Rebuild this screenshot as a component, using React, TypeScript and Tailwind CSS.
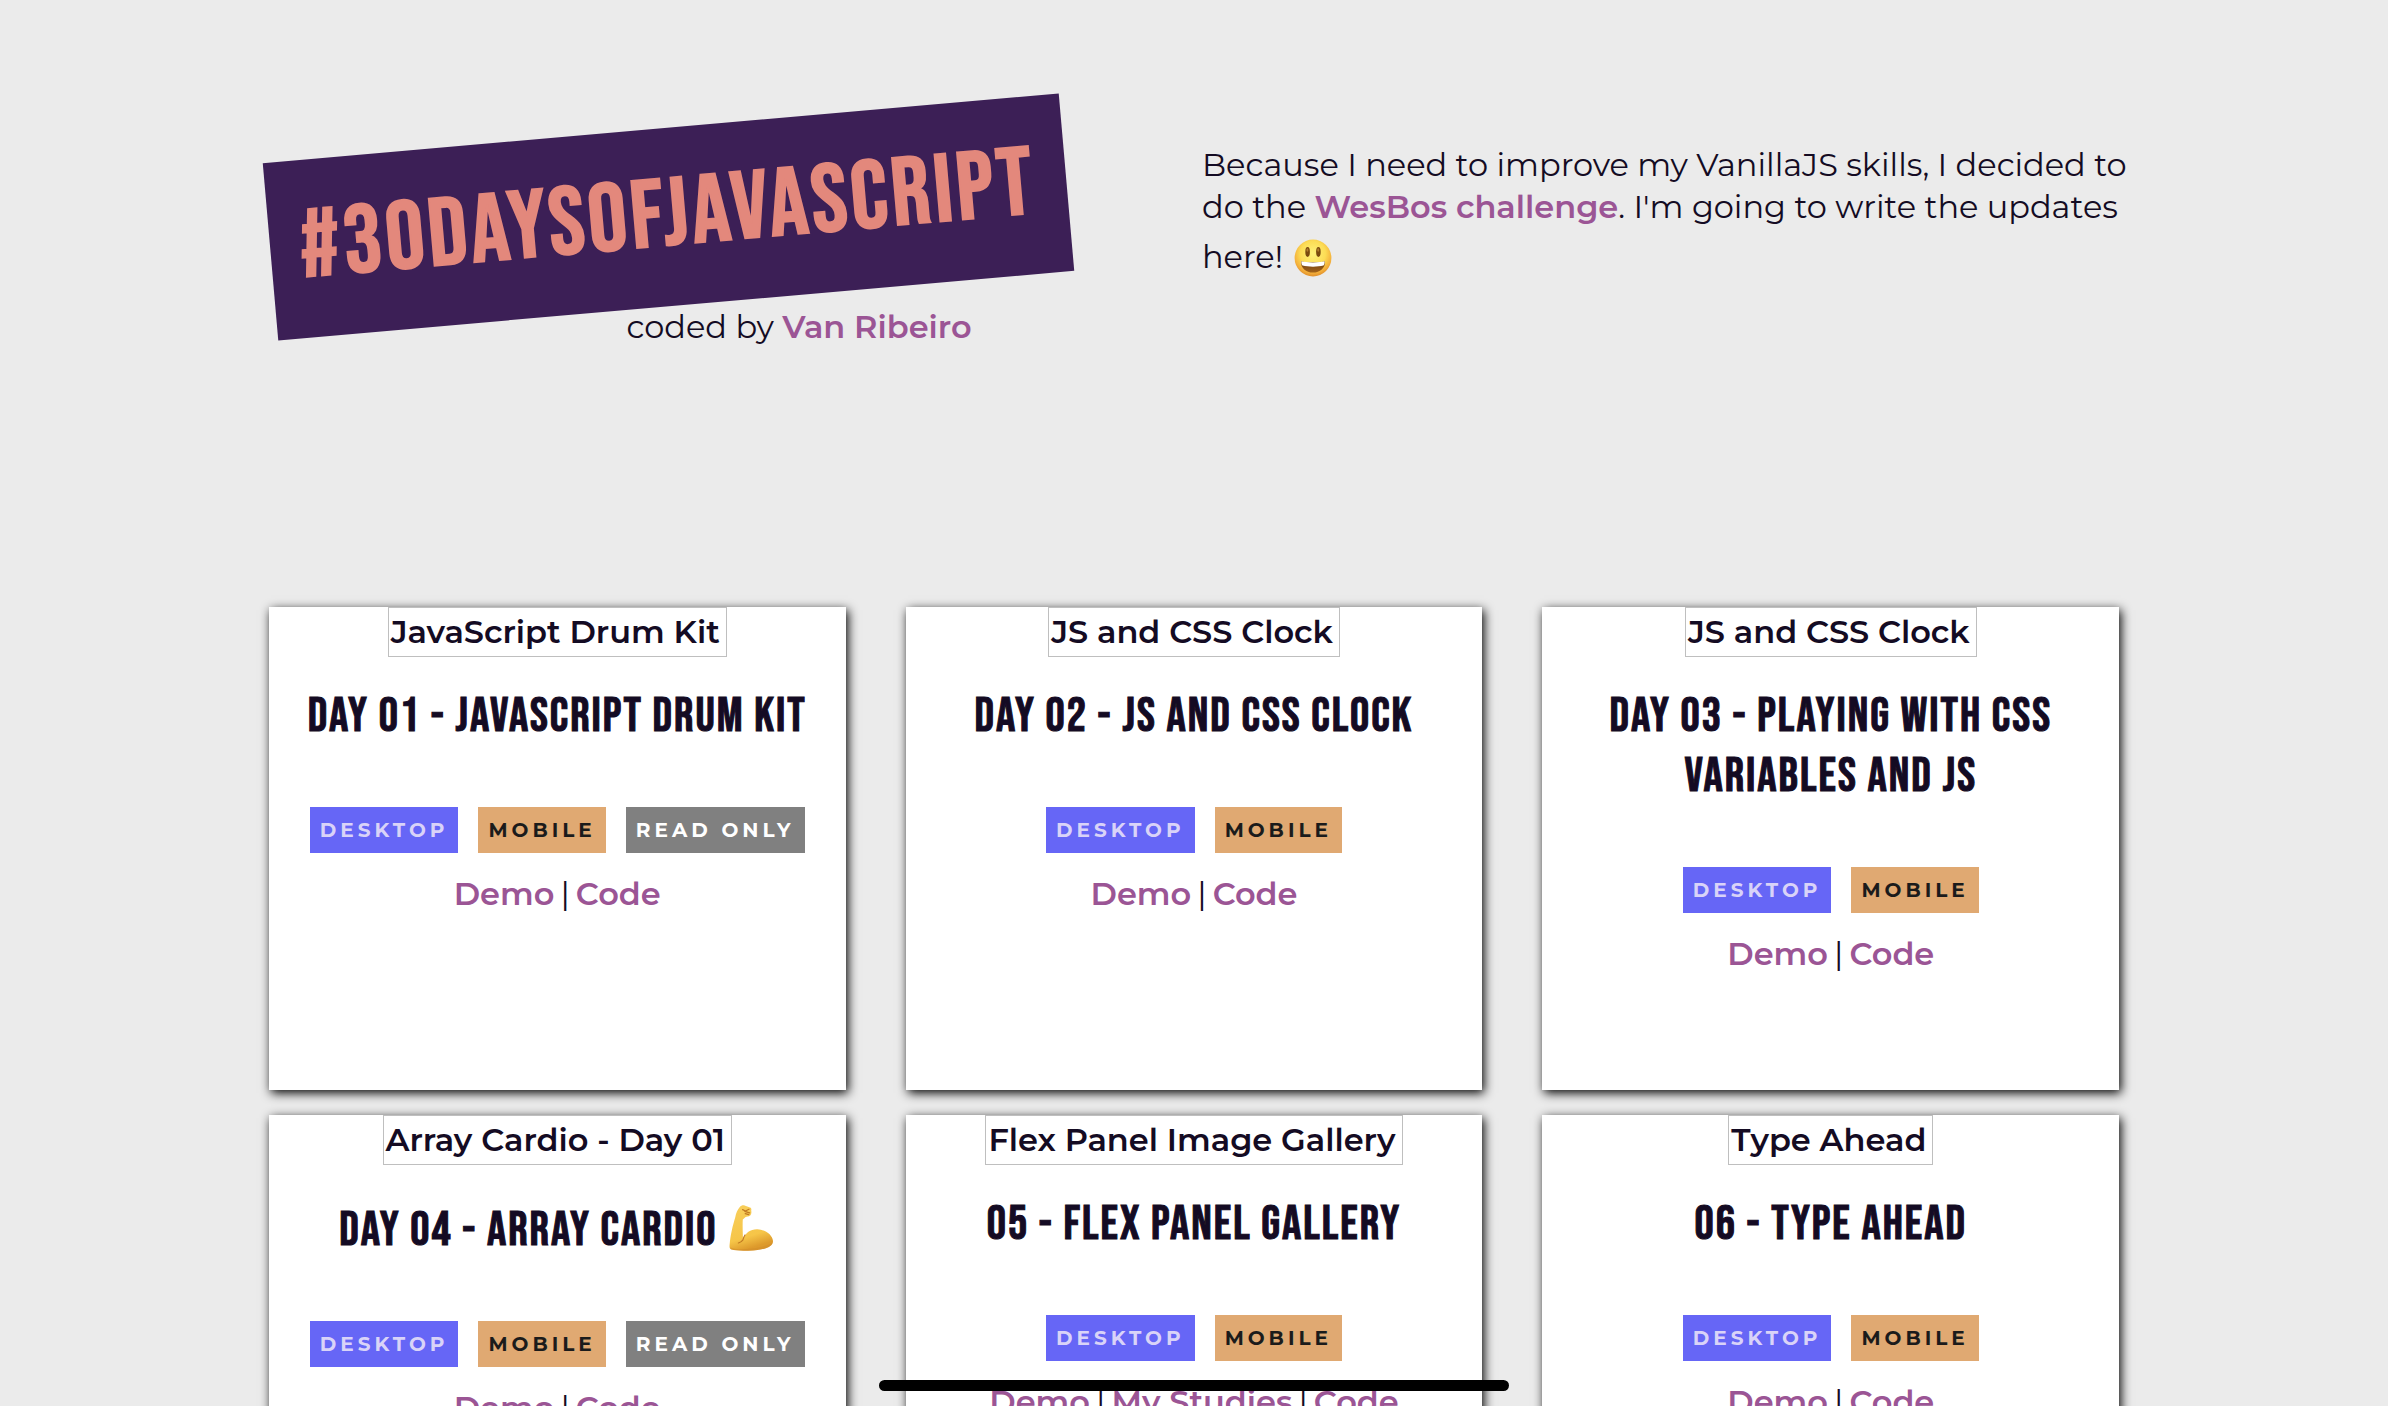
import type { ReactNode } from "react";

type Tag = "desktop" | "mobile" | "readonly";

interface Project {
  label: string;
  title: string;
  strong?: boolean;
  tags: Tag[];
  links: string[];
}

const projects: Project[] = [
  { label: "JavaScript Drum Kit", title: "Day 01 - JavaScript Drum Kit", tags: ["desktop", "mobile", "readonly"], links: ["Demo", "Code"] },
  { label: "JS and CSS Clock", title: "Day 02 - JS and CSS Clock", tags: ["desktop", "mobile"], links: ["Demo", "Code"] },
  { label: "JS and CSS Clock", title: "Day 03 - Playing with CSS Variables and JS", tags: ["desktop", "mobile"], links: ["Demo", "Code"] },
  { label: "Array Cardio - Day 01", title: "Day 04 - Array Cardio", strong: true, tags: ["desktop", "mobile", "readonly"], links: ["Demo", "Code"] },
  { label: "Flex Panel Image Gallery", title: "05 - Flex Panel Gallery", tags: ["desktop", "mobile"], links: ["Demo", "My Studies", "Code"] },
  { label: "Type Ahead", title: "06 - Type Ahead", tags: ["desktop", "mobile"], links: ["Demo", "Code"] },
];

const tagStyles: Record<Tag, { text: string; className: string }> = {
  desktop: { text: "Desktop", className: "bg-[#6666f6] text-[#d9d3f8]" },
  mobile: { text: "Mobile", className: "bg-[#e0a972] text-[#1b1b1b]" },
  readonly: { text: "Read only", className: "bg-[#808080] text-white" },
};

function Smiley() {
  return (
    <svg viewBox="0 0 40 40" role="img" aria-label="Smiling face" className="mt-2.5 ml-0.5 inline-block size-10 align-[-10px]">
      <defs>
        <radialGradient id="face" cx="0.5" cy="0.38" r="0.62">
          <stop offset="0" stopColor="#fff27a" />
          <stop offset="0.55" stopColor="#fcdc55" />
          <stop offset="0.85" stopColor="#f3ae3a" />
          <stop offset="1" stopColor="#e08f2c" />
        </radialGradient>
        <linearGradient id="mouth" x1="0" y1="0" x2="0" y2="1">
          <stop offset="0" stopColor="#6b3d10" />
          <stop offset="1" stopColor="#a5641a" />
        </linearGradient>
      </defs>
      <circle cx="20" cy="20" r="18.4" fill="url(#face)" />
      <ellipse cx="14.6" cy="14" rx="2.3" ry="5" fill="#7a4a0e" />
      <ellipse cx="25.4" cy="14" rx="2.3" ry="5" fill="#7a4a0e" />
      <ellipse cx="14.4" cy="12" rx="1" ry="1.8" fill="#b07d2c" />
      <ellipse cx="25.2" cy="12" rx="1" ry="1.8" fill="#b07d2c" />
      <path d="M8 23.2C12 24.6 28 24.6 32 23.2C32.4 30 27 34.6 20 34.6S7.6 30 8 23.2Z" fill="url(#mouth)" />
      <path d="M8.4 23.3C13 24.8 27 24.8 31.6 23.3C31.8 25.4 31.2 27 30.4 27.6C25 29 15 29 9.6 27.6C8.8 27 8.2 25.4 8.4 23.3Z" fill="#fff" />
    </svg>
  );
}

function Biceps() {
  return (
    <svg viewBox="0 0 48 48" role="img" aria-label="Flexed biceps" className="mt-[9px] inline-block size-12 align-[-7px]">
      <defs>
        <linearGradient id="arm" x1="0" y1="0" x2="0.3" y2="1">
          <stop offset="0" stopColor="#f8cf5c" />
          <stop offset="0.75" stopColor="#f6c548" />
          <stop offset="1" stopColor="#dd9a2c" />
        </linearGradient>
      </defs>
      <path
        d="M12.6 3.2C14 1.6 16 1 17.6 1.5L23 3.6C24.4 4.2 24.6 5.4 24.2 6.6C24.6 8 24.4 10.6 23.2 11.6C21.6 12.8 20 12.6 18.6 13L15.8 15.6C15.4 21 15.8 29 16 35.6C18.6 28.4 23.6 25 30.4 25.2C38.6 25.6 45.6 31 46 37C46.2 42.6 37.4 46 26 46.4C17 46.8 8.6 46.8 4.4 45.6C2.6 45 2.4 43.4 2.6 41C3.6 30 5.6 22 8.2 13.4C9 9 10.6 5.6 12.6 3.2Z"
        fill="url(#arm)"
      />
      <path d="M3.4 43.4C9 46 22 45.6 31 43.6C37 42.2 42 40.6 45.6 38.4C44.6 43.2 36.8 46 26 46.4C17 46.8 8.6 46.8 4.4 45.6C3.6 45.2 3.2 44.6 3.4 43.4Z" fill="#cf8a2a" opacity="0.45" />
      <path d="M16 35.8C14.6 37.6 13 38.6 11.4 39M16 35.6C16.4 34 17 32.4 18 31M15.6 5.6L18.4 7L22 5.2M17.8 7.4L22.6 8.8M18.2 9.6L21.8 10.6" fill="none" stroke="#c07a22" strokeWidth="1.2" strokeLinecap="round" strokeLinejoin="round" />
    </svg>
  );
}

function TextLink({ children }: { children: ReactNode }) {
  return (
    <a href="#" className="font-semibold text-[#9b5595]">
      {children}
    </a>
  );
}

function Card({ project }: { project: Project }) {
  return (
    <article className="flex min-h-[483px] flex-col items-center bg-white px-5 text-center shadow-[2px_3px_10px_#000000]">
      <p className="h-[50px] border border-[#bfbfbf] pt-[3px] pr-1.5 pl-0.5 font-semibold">{project.label}</p>
      <h2 className="mt-[30px] font-['Bebas_Neue','Oswald',sans-serif] text-5xl leading-[60px] font-normal tracking-[2px] [-webkit-text-stroke:1px_#140b23]">
        {project.title}
        {project.strong && (
          <>
            {" "}
            <Biceps />
          </>
        )}
      </h2>
      <ul className="mt-[60px] flex gap-5">
        {project.tags.map((tag) => (
          <li key={tag} className={`px-2.5 text-xl leading-[46px] font-bold tracking-[4px] uppercase ${tagStyles[tag].className}`}>
            {tagStyles[tag].text}
          </li>
        ))}
      </ul>
      <p className="mt-5 flex">
        {project.links.map((link, i) => (
          <span key={link}>
            {i > 0 && <span className="mx-1.5">|</span>}
            <TextLink>{link}</TextLink>
          </span>
        ))}
      </p>
    </article>
  );
}

export default function App() {
  return (
    <div className="h-screen overflow-hidden bg-[#ebebeb] font-['Montserrat','Open_Sans',sans-serif] text-[32px] leading-[42px] text-[#140b23]">
      <div className="mx-auto w-4/5 pt-32">
        <header className="grid grid-cols-2 gap-4">
          <div className="w-fit pl-[30px]">
            <h1 className="-rotate-5 bg-[#3c1f56] px-[30px] font-['Bebas_Neue','Oswald',sans-serif] text-8xl leading-[178px] font-normal tracking-[4px] text-[#e3887c] [-webkit-text-stroke:2px_#e3887c]">
              #30DaysOfJavaScript
            </h1>
            <p className="pr-24 text-right">
              coded by <TextLink>Van Ribeiro</TextLink>
            </p>
          </div>
          <p className="pt-4">
            Because I need to improve my VanillaJS skills, I decided to do the <TextLink>WesBos challenge</TextLink>. I'm going to write the updates here! <Smiley />
          </p>
        </header>
        <main className="mt-[259px] grid grid-cols-3 gap-x-[60px] gap-y-[25px] px-[30px]">
          {projects.map((project) => (
            <Card key={project.title} project={project} />
          ))}
        </main>
      </div>
      <div className="fixed bottom-[15px] left-1/2 h-[11px] w-[630px] -translate-x-1/2 rounded-full bg-black" />
    </div>
  );
}
